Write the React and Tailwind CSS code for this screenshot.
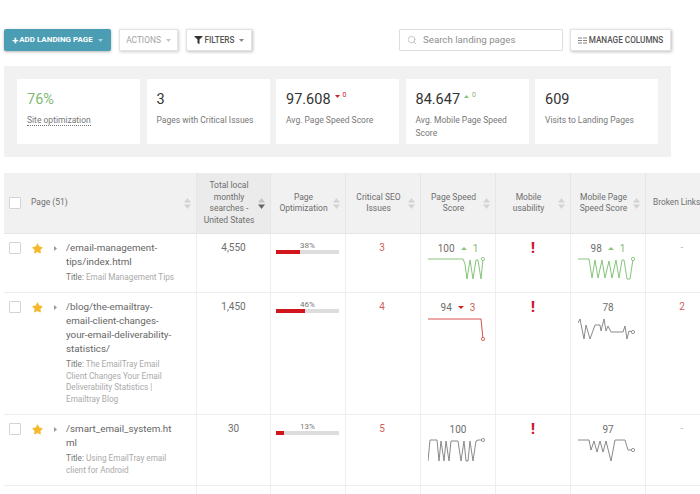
import React from 'react';
import { Search } from 'lucide-react';
import { FaFilter, FaStar } from 'react-icons/fa';

const stats = [
  { value: '76%', label: 'Site optimization', green: true, dotted: true },
  { value: '3', label: 'Pages with Critical Issues' },
  { value: '97.608', label: 'Avg. Page Speed Score', delta: 'down' },
  { value: '84.647', label: 'Avg. Mobile Page Speed Score', delta: 'up' },
  { value: '609', label: 'Visits to Landing Pages' },
];

const columns = [
  ['Total local', 'monthly', 'searches -', 'United States'],
  ['Page', 'Optimization'],
  ['Critical SEO', 'Issues'],
  ['Page Speed', 'Score'],
  ['Mobile', 'usability'],
  ['Mobile Page', 'Speed Score'],
];

const rows = [
  {
    height: 'h-[59px]',
    path: ['/email-management-', 'tips/index.html'],
    title: ['Email Management Tips'],
    searches: '4,550',
    percent: 38,
    critical: '3',
    speed: { value: '100', dir: 'up', delta: '1', color: '#86c57a', points: '0,3 35,3 37,8 39,23 42,4 45,23 48,4 50,4 53,23 55,3' },
    mobile: { value: '98', dir: 'up', delta: '1', color: '#86c57a', points: '0,3 11,3 14,22 17,4 20,22 24,4 27,22 31,5 34,22 38,4 41,22 44,4 46,4 49,23 52,23 55,3' },
    broken: '-',
  },
  {
    height: 'h-[122px]',
    path: ['/blog/the-emailtray-', 'email-client-changes-', 'your-email-deliverability-', 'statistics/'],
    title: ['The EmailTray Email', 'Client Changes Your Email', 'Deliverability Statistics |', 'Emailtray Blog'],
    searches: '1,450',
    percent: 46,
    critical: '4',
    speed: { value: '94', dir: 'down', delta: '3', color: '#d9534f', points: '0,4 53,4 55,24' },
    mobile: { value: '78', color: '#8a8a8a', points: '0,8 2,4 6,24 8,10 12,24 17,10 22,10 23,16 26,4 28,16 30,11 33,17 45,17 47,11 49,24 51,16 55,17' },
    broken: '2',
  },
  {
    height: 'h-[71px]',
    path: ['/smart_email_system.ht', 'ml'],
    title: ['Using EmailTray email', 'client for Android'],
    searches: '30',
    percent: 13,
    critical: '5',
    speed: { value: '100', color: '#8a8a8a', points: '0,24 2,3 9,3 11,24 13,4 16,24 18,4 21,24 23,4 30,4 33,24 36,4 38,24 40,24 42,4 45,24 48,4 50,3 55,3' },
    mobile: { value: '97', color: '#8a8a8a', points: '0,3 11,3 13,13 16,4 19,15 22,4 25,15 28,4 33,24 37,3 47,3 50,13 55,13' },
    broken: '-',
  },
];

const gridCols = 'grid grid-cols-[193px_74px_75px_75px_75px_75px_75px_75px]';

const Caret = ({ color = '#9a9a9a' }) => (
  <svg width="5" height="3" viewBox="0 0 5 3" className="ml-[5px] shrink-0">
    <path d="M0 0h5L2.5 3z" fill={color} />
  </svg>
);

const SortIcon = ({ active }) => (
  <svg width="7" height="11" viewBox="0 0 7 11" className="shrink-0">
    <path d="M3.5 0L7 4.5H0z" fill={active ? '#c4c4c4' : '#d4d4d4'} />
    <path d="M3.5 11L0 6.5h7z" fill={active ? '#666' : '#d4d4d4'} />
  </svg>
);

const Checkbox = () => <div className="w-[12px] h-[12px] shrink-0 border border-[#d4d4d4] bg-white rounded-[1px]" />;

const Delta = ({ dir, value }) => (
  <span className="inline-flex items-center gap-[6px]">
    <svg width="6" height="3" viewBox="0 0 6 3">
      <path d={dir === 'up' ? 'M3 0l3 3H0z' : 'M0 0h6L3 3z'} fill={dir === 'up' ? '#86c57a' : '#c9252b'} />
    </svg>
    <span className={dir === 'up' ? 'text-[#7fb974]' : 'text-[#d0605c]'}>{value}</span>
  </span>
);

const Spark = ({ points, color }) => {
  const last = points.split(' ').pop().split(',');
  return (
    <svg width="60" height="27" viewBox="0 0 60 27" className="block" fill="none">
      <polyline points={points} stroke={color} strokeWidth="1" strokeLinejoin="round" />
      <circle cx={last[0]} cy={last[1]} r="1.6" fill="#fff" stroke={color} strokeWidth="0.9" />
    </svg>
  );
};

const SpeedCell = ({ data }) => (
  <div className="flex flex-col items-center pt-[6px] border-r border-[#eeeeee]">
    <div className="h-[16px] flex items-center justify-center gap-[6px] text-[10px] text-[#6e6e6e]">
      <span>{data.value}</span>
      {data.dir && <Delta dir={data.dir} value={data.delta} />}
    </div>
    <div className="w-[60px]">
      <Spark points={data.points} color={data.color} />
    </div>
  </div>
);

const Exclaim = () => (
  <div className="flex justify-center pt-[7px] border-r border-[#eeeeee]">
    <span className="text-[14px] leading-[14px] font-black text-[#d1122f]">!</span>
  </div>
);

export default function App() {
  return (
    <div
      className="w-[700px] h-[494px] overflow-hidden bg-white text-[#555555]"
      style={{ fontFamily: 'Roboto, "Liberation Sans", sans-serif' }}
    >
      {/* toolbar */}
      <div className="flex items-start pt-[29px] pl-[4px] h-[66px]">
        <button className="w-[107px] h-[22px] flex items-center justify-center rounded-[2px] bg-[#4a9db3] text-white text-[8px] font-bold shadow-[0_1px_3px_rgba(0,0,0,0.3)]">
          <span className="text-[11px] leading-none mr-[1px]">+</span>
          ADD LANDING PAGE
          <Caret color="#a9d3de" />
        </button>
        <button className="ml-[8px] w-[59px] h-[22px] flex items-center justify-center bg-white border border-[#e2e2e2] text-[#a3a3a3] text-[8.4px] shadow-[1px_1px_3px_rgba(0,0,0,0.2)]">
          ACTIONS
          <Caret color="#c4c4c4" />
        </button>
        <button className="ml-[8px] w-[66px] h-[22px] flex items-center justify-center bg-white border border-[#e2e2e2] text-[#555555] text-[8.2px] font-medium shadow-[1px_1px_3px_rgba(0,0,0,0.25)]">
          <FaFilter className="w-[9px] h-[8px] mr-[2px] text-[#333333]" />
          FILTERS
          <Caret color="#888888" />
        </button>
        <div className="ml-[147px] w-[164px] h-[22px] flex items-center pl-[7px] border border-[#dddddd] rounded-[1px] text-[#8e8e8e] text-[9.7px]">
          <Search className="w-[10px] h-[10px] mr-[6px] text-[#aaaaaa]" strokeWidth={1.5} />
          Search landing pages
        </div>
        <button className="ml-[7px] w-[101px] h-[22px] flex items-center justify-center bg-white border border-[#e2e2e2] text-[#555555] text-[8.2px] font-medium shadow-[1px_1px_3px_rgba(0,0,0,0.25)]">
          <svg width="9" height="7" viewBox="0 0 9 7" className="mr-[2px]" stroke="#666666" strokeWidth="0.8">
            <path d="M0 1h4M0 3.5h4M0 6h4M5 1h4M5 3.5h4M5 6h4" />
          </svg>
          MANAGE COLUMNS
        </button>
      </div>

      {/* stat cards */}
      <div className="ml-[4px] w-[667px] h-[91px] bg-[#f1f1f1] pl-[13px] pt-[13px] flex gap-[6.5px]">
        {stats.map((stat) => (
          <div key={stat.label} className="w-[123px] h-[65px] bg-white pl-[10px] pr-[6px] pt-[12px]">
            <div className={`flex items-start h-[17px] text-[14.5px] leading-[17px] ${stat.green ? 'text-[#7fb974]' : 'text-[#333333]'}`}>
              {stat.value}
              {stat.delta && (
                <span className="ml-[4px] flex items-center gap-[3px] text-[7px] leading-[9px]">
                  <svg width="5" height="3" viewBox="0 0 5 3" className="mt-[2px]">
                    <path d={stat.delta === 'up' ? 'M2.5 0L5 3H0z' : 'M0 0h5L2.5 3z'} fill={stat.delta === 'up' ? '#86c57a' : '#c9252b'} />
                  </svg>
                  <span className={stat.delta === 'up' ? 'text-[#7fb974]' : 'text-[#c9252b]'}>0</span>
                </span>
              )}
            </div>
            <div className="mt-[6px] text-[8.5px] leading-[12.5px] text-[#777777]">
              <span className={stat.dotted ? 'border-b border-dotted border-[#777777]' : ''}>{stat.label}</span>
            </div>
          </div>
        ))}
      </div>

      {/* table */}
      <div className="ml-[4px] mt-[16px]">
        <div className={`${gridCols} h-[61px] bg-[#f1f1f1] border-b border-[#e6e6e6] text-[8.5px] leading-[11.5px] text-[#6e6e6e]`}>
          <div className="flex items-center pl-[5px] pr-[5px] border-r border-[#e6e6e6]">
            <Checkbox />
            <span className="ml-[10px] text-[8.5px]">Page (51)</span>
            <span className="ml-auto"><SortIcon /></span>
          </div>
          {columns.map((lines, i) => (
            <div key={lines[0]} className={`flex items-center pl-[3px] pr-[5px] border-r border-[#e6e6e6] ${i === 0 ? 'bg-[#ebebeb]' : ''}`}>
              <div className="flex-1 text-center">
                {lines.map((line) => <div key={line}>{line}</div>)}
              </div>
              <SortIcon active={i === 0} />
            </div>
          ))}
          <div className="flex items-center pl-[7px] text-[8.3px] whitespace-nowrap">Broken Links</div>
        </div>

        {rows.map((row) => (
          <div key={row.searches} className={`${gridCols} ${row.height} border-b border-[#eeeeee]`}>
            <div className="flex items-start pl-[5px] pt-[8px] border-r border-[#eeeeee]">
              <Checkbox />
              <FaStar className="ml-[11px] mt-[1px] w-[11px] h-[11px] shrink-0 text-[#f5b92e]" />
              <svg width="3" height="5" viewBox="0 0 3 5" className="ml-[11px] mt-[4px] shrink-0">
                <path d="M0 0l3 2.5L0 5z" fill="#999999" />
              </svg>
              <div className="ml-[9px] -mt-[1px]">
                <div className="text-[9.8px] leading-[14px] text-[#666666] whitespace-nowrap">
                  {row.path.map((line) => <div key={line}>{line}</div>)}
                </div>
                <div className="mt-[3px] text-[8.2px] leading-[11.6px] text-[#aaaaaa] whitespace-nowrap">
                  {row.title.map((line, i) => (
                    <div key={line}>{i === 0 && <span className="text-[#777777]">Title: </span>}{line}</div>
                  ))}
                </div>
              </div>
            </div>
            <div className="pt-[7px] text-center text-[10px] leading-[14px] text-[#6e6e6e] border-r border-[#eeeeee]">{row.searches}</div>
            <div className="pl-[5px] pr-[6px] pt-[7px] border-r border-[#eeeeee]">
              <div className="text-center text-[8px] leading-[9px] text-[#777777]">{row.percent}%</div>
              <div className="h-[4px] bg-[#dddddd]">
                <div className="h-full bg-[#d2141c]" style={{ width: `${row.percent}%` }} />
              </div>
            </div>
            <div className="pt-[7px] pr-[2px] text-center text-[10px] leading-[14px] text-[#cf5f5c] border-r border-[#eeeeee]">{row.critical}</div>
            <SpeedCell data={row.speed} />
            <Exclaim />
            <SpeedCell data={row.mobile} />
            <div className={`pt-[7px] pr-[3px] text-center text-[10px] leading-[14px] ${row.broken === '-' ? 'text-[#bbbbbb]' : 'text-[#cf5f5c]'}`}>{row.broken}</div>
          </div>
        ))}

        <div className={`${gridCols} h-[20px]`}>
          {[0, 1, 2, 3, 4, 5, 6].map((i) => <div key={i} className="border-r border-[#eeeeee]" />)}
        </div>
      </div>
    </div>
  );
}
